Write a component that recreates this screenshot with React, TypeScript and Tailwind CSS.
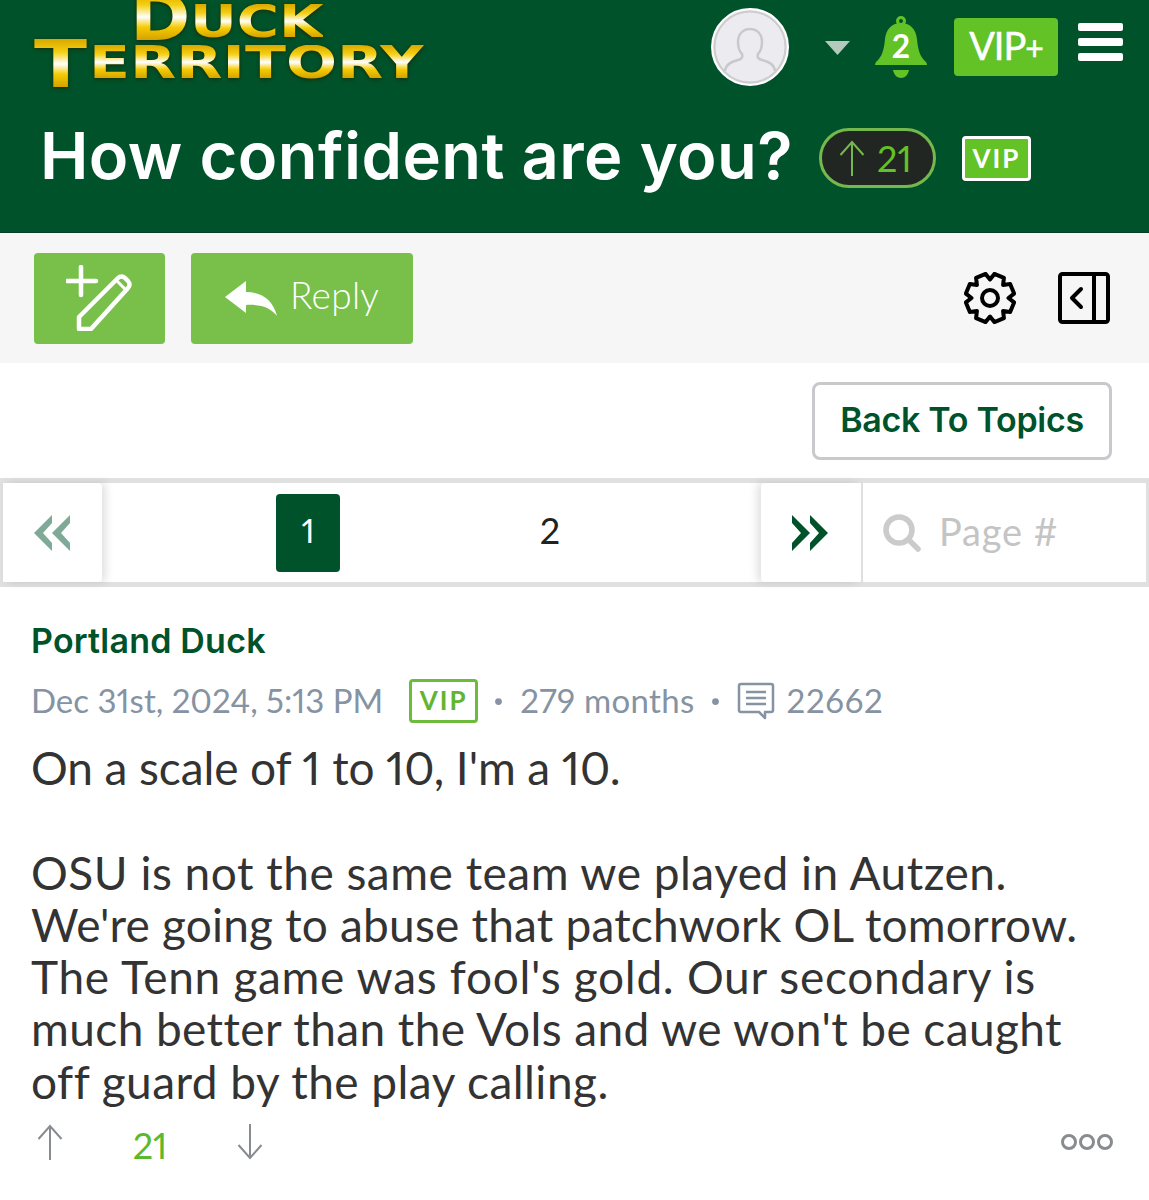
const gearPath = (() => {
  const cx = 26, cy = 26, ro = 24.5, ri = 18.5, n = 8;
  const pts: string[] = [];
  for (let i = 0; i < n; i++) {
    const a = (i * 2 * Math.PI) / n + Math.PI / 8;
    const step = (2 * Math.PI) / n;
    const offs: [number, number][] = [
      [-0.5, ri],
      [-0.27, ro],
      [0.27, ro],
      [0.5, ri],
    ];
    offs.forEach(([t, r]) => {
      const th = a + t * step;
      pts.push(`${(cx + r * Math.cos(th)).toFixed(2)},${(cy + r * Math.sin(th)).toFixed(2)}`);
    });
  }
  return pts.join(" ");
})();

function Logo() {
  const grad = "bg-[linear-gradient(180deg,#d9a800_0%,#f5cf10_25%,#ffffff_48%,#f5cb00_68%,#c99500_100%)] bg-clip-text text-transparent inline-block origin-left";
  return (
    <div className="w-[392px] h-[88px] flex flex-col shrink-0 font-['DejaVu_Sans',sans-serif] font-bold whitespace-nowrap [filter:drop-shadow(0_1px_2px_#1a2a00)]">
      <div className="pl-[96px] h-[39px] flex items-start">
        <span className={`${grad} text-[65px] leading-[52px] -mt-[8px] scale-x-[1.12]`}>D</span>
        <span className={`${grad} text-[45px] leading-[36px] mt-[4px] ml-[6px] scale-x-[1.28]`}>UCK</span>
      </div>
      <div className="h-[49px] flex items-start">
        <span className={`${grad} text-[65px] leading-[52px] scale-x-[1.2]`}>T</span>
        <span className={`${grad} text-[45px] leading-[36px] mt-[6px] ml-[11px] scale-x-[1.335]`}>ERRITORY</span>
      </div>
    </div>
  );
}

function Avatar() {
  return (
    <svg viewBox="0 0 78 78" className="w-[78px] h-[78px] shrink-0">
      <circle cx="39" cy="39" r="38" fill="#ececf0" stroke="#ffffff" strokeWidth="2" />
      <circle cx="39" cy="39" r="35.500" fill="none" stroke="#cccccf" strokeWidth="2" />
      <path d="M14 63c1-7 6-9 13-11 4-1 5-3 4-6-3-3-4-7-4-12 0-8 5-13 12-13s12 5 12 13c0 5-1 9-4 12-1 3 0 5 4 6 7 2 12 4 13 11" fill="none" stroke="#c9c9cd" strokeWidth="2.500" strokeLinejoin="round" />
    </svg>
  );
}

function Bell() {
  return (
    <div className="relative w-[52px] h-[62px] shrink-0">
      <svg viewBox="0 0 52 62" className="w-[52px] h-[62px]">
        <circle cx="26" cy="5" r="3.500" fill="none" stroke="#62c226" strokeWidth="3" />
        <path d="M26 7c10 0 15 7 16 16 1 11 3 18 9 23 1 2 1 3 1 3H0s0-1 1-3c6-5 8-12 9-23C11 14 16 7 26 7z" fill="#62c226" />
        <path d="M18 54h16c-1 5-4 8-8 8s-7-3-8-8z" fill="#62c226" />
      </svg>
      <span className="absolute left-0 right-0 top-[12px] text-center text-white text-[32px] leading-[36px] font-bold">2</span>
    </div>
  );
}

function Chevrons({ dir, color }: { dir: "left" | "right"; color: string }) {
  return (
    <svg viewBox="0 0 38 36" className="w-[38px] h-[36px]" fill={color}>
      {dir === "left" ? (
        <>
          <polygon points="18,0 18,8 9,18 18,28 18,36 0,18" />
          <polygon points="36,0 36,8 27,18 36,28 36,36 18,18" />
        </>
      ) : (
        <>
          <polygon points="0,0 18,18 0,36 0,28 9,18 0,8" />
          <polygon points="18,0 36,18 18,36 18,28 27,18 18,8" />
        </>
      )}
    </svg>
  );
}

function ThinArrow({ up, className, color }: { up: boolean; className: string; color: string }) {
  return (
    <svg viewBox="0 0 26 36" className={className} fill="none" stroke={color} strokeWidth="2">
      {up ? <path d="M13 36V2M1.500 15 13 2l11.500 13" /> : <path d="M13 0v34M1.500 21 13 34l11.500-13" />}
    </svg>
  );
}

export default function App() {
  return (
    <div className="w-[1149px] h-[1200px] overflow-hidden bg-white font-['Lato',sans-serif] proportional-nums">
      <header className="h-[233px] bg-[#00522a] border-b border-b-[#0b3d26] overflow-hidden">
        <div className="flex items-start pl-[34px] pr-[26px] h-[103px]">
          <Logo />
          <div className="ml-auto flex items-start">
            <div className="mt-[8px]"><Avatar /></div>
            <svg viewBox="0 0 25 14" className="w-[25px] h-[14px] mt-[41px] ml-[36px] shrink-0">
              <polygon points="0,0 25,0 12.500,14" fill="#b4cabd" />
            </svg>
            <div className="mt-[16px] ml-[25px]"><Bell /></div>
            <div className="mt-[18px] ml-[27px] w-[104px] h-[58px] rounded-[4px] bg-[#62c226] text-white text-[38px] leading-[54px] text-center font-normal tracking-[-1px] [-webkit-text-stroke:0.5px_white]">
              VIP<span className="text-[32px]">+</span>
            </div>
            <div className="mt-[23px] ml-[20px] w-[45px] flex flex-col gap-[7px]">
              <div className="h-[8px] rounded-[2px] bg-white" />
              <div className="h-[8px] rounded-[2px] bg-white" />
              <div className="h-[8px] rounded-[2px] bg-white" />
            </div>
          </div>
        </div>
        <div className="flex items-center pl-[40px] h-[100px]">
          <h1 className="text-[65px] leading-[100px] pt-[5px] font-['Inter',sans-serif] font-semibold text-white whitespace-nowrap tracking-[0.4px]">How confident are you?</h1>
          <div className="ml-[26px] w-[117px] h-[60px] rounded-full bg-[#222623] border-[3px] border-[#74b84e] flex items-center pl-[17px] gap-[12px] mt-[10px] shrink-0">
            <ThinArrow up className="w-[26px] h-[36px]" color="#74b84e" />
            <span className="text-[#62c226] text-[36px] leading-none">21</span>
          </div>
          <div className="ml-[26px] w-[69px] h-[45px] rounded-[4px] bg-[#62c226] border-[3px] border-white text-white text-[26px] leading-[39px] text-center font-bold tracking-[2px] mt-[10px] shrink-0">VIP</div>
        </div>
      </header>

      <div className="h-[130px] bg-[#f6f6f6] flex items-center pl-[34px] pr-[39px]">
        <button className="w-[131px] h-[91px] rounded-[4px] bg-[#78c04a] flex items-center justify-center">
          <svg viewBox="0 0 68 66" className="w-[68px] h-[66px]" fill="none" stroke="#fff" strokeWidth="4.500" strokeLinecap="round" strokeLinejoin="round">
            <path d="M15 2v28M1 16h29" />
            <path d="M13 64V52L52 13c2-2 5-2 7 0l3 3c2 2 2 5 0 7L25 64z" />
            <path d="M50 15l10 10" strokeWidth="3" />
          </svg>
        </button>
        <button className="ml-[26px] w-[222px] h-[91px] rounded-[4px] bg-[#78c04a] flex items-center pl-[34px] gap-[13px] text-white">
          <svg viewBox="0 0 52 35" className="w-[52px] h-[35px] shrink-0" fill="#fff">
            <path d="M0 16 21 0v11c16 0 27 8 31 24C46 27 36 23 21 24v8z" />
          </svg>
          <span className="text-[37px] leading-none font-light pb-[7px] tracking-[0.3px]">Reply</span>
        </button>
        <div className="ml-auto flex items-center gap-[42px]">
          <svg viewBox="0 0 52 52" className="w-[52px] h-[52px]" fill="none" stroke="#000" strokeWidth="4" strokeLinejoin="round">
            <polygon points={gearPath} />
            <circle cx="26" cy="26" r="8" />
          </svg>
          <svg viewBox="0 0 52 52" className="w-[52px] h-[52px]" fill="none" stroke="#000" strokeWidth="4" strokeLinejoin="round" strokeLinecap="round">
            <rect x="2" y="2" width="48" height="48" rx="2.500" />
            <path d="M36 2v48" />
            <path d="M23 17 14 26l9 9" />
          </svg>
        </div>
      </div>

      <div className="h-[115px] flex items-start justify-end pt-[19px] pr-[37px]">
        <button className="w-[300px] h-[78px] rounded-[8px] border-[3px] border-[#c8c8cd] text-[#00522a] text-[34px] font-['Inter',sans-serif] font-semibold tracking-[-0.3px] leading-none pb-[3px]">Back To Topics</button>
      </div>

      <nav className="h-[109px] border-y-[5px] border-y-[#e0e0e0] border-x-[3px] border-x-[#e0e0e0] flex items-stretch">
        <div className="w-[99px] rounded-[4px] bg-white shadow-[4px_0_8px_rgba(0,0,0,0.12)] flex items-center justify-center shrink-0">
          <Chevrons dir="left" color="#7faa97" />
        </div>
        <div className="flex-1 flex items-center">
          <div className="ml-[174px] w-[64px] h-[78px] rounded-[4px] bg-[#00522a] text-white text-[33px] font-normal flex items-center justify-center pb-[3px]">1</div>
          <div className="ml-[178px] w-[64px] text-center text-[#222] text-[36px] pb-[5px]">2</div>
        </div>
        <div className="w-[100px] rounded-[4px] bg-white shadow-[-4px_0_8px_rgba(0,0,0,0.12)] flex items-center justify-center shrink-0">
          <Chevrons dir="right" color="#00522a" />
        </div>
        <div className="w-[285px] border-l-[2px] border-l-[#e0e0e0] flex items-center pl-[20px] gap-[18px] shrink-0">
          <svg viewBox="0 0 38 38" className="w-[38px] h-[38px]" fill="none" stroke="#cbcbcb" strokeWidth="5.500" strokeLinecap="round">
            <circle cx="16" cy="16" r="13" />
            <path d="M26 26l9 9" />
          </svg>
          <span className="text-[#c4c4c4] text-[38px] leading-none font-normal tracking-[0.8px] pb-[3px]">Page #</span>
        </div>
      </nav>

      <article className="pl-[31px] pr-[36px] pt-[34px]">
        <div className="text-[#00522a] text-[34px] leading-[40px] font-['Inter',sans-serif] font-semibold tracking-[0.2px]">Portland Duck</div>
        <div className="mt-[18px] h-[44px] flex items-center text-[#8593a3] text-[33px] whitespace-nowrap">
          <span>Dec 31st, 2024, 5:13 PM</span>
          <span className="ml-[26px] w-[69px] h-[44px] rounded-[4px] border-[3px] border-[#6cbb3c] text-[#62b52f] text-[26px] leading-[37px] text-center font-bold tracking-[2px]">VIP</span>
          <span className="ml-[16px] w-[9px] h-[9px] rounded-full bg-[#8593a3] scale-75" />
          <span className="ml-[17px] tracking-[0.3px]">279 months</span>
          <span className="ml-[17px] w-[9px] h-[9px] rounded-full bg-[#8593a3] scale-75" />
          <svg viewBox="0 0 38 38" className="ml-[17px] w-[38px] h-[38px] shrink-0" fill="none" stroke="#8593a3" strokeWidth="2.500" strokeLinejoin="round">
            <path d="M4 2h30a2 2 0 0 1 2 2v24a2 2 0 0 1-2 2h-6v6l-6-6H4a2 2 0 0 1-2-2V4a2 2 0 0 1 2-2z" />
            <path d="M9 10h20M9 16h20M9 22h20" />
          </svg>
          <span className="ml-[11px] tracking-[0.7px]">22662</span>
        </div>
        <div className="mt-[19px] text-[#333333] text-[46px] leading-[52.300px] whitespace-nowrap">
          <p className="tracking-[-0.1px]">On a scale of 1 to 10, I'm a 10.</p>
          <p>&nbsp;</p>
          <p className="tracking-[0.5px]">OSU is not the same team we played in Autzen.</p>
          <p className="tracking-[0.2px]">We're going to abuse that patchwork OL tomorrow.</p>
          <p className="tracking-[0.7px]">The Tenn game was fool's gold. Our secondary is</p>
          <p className="tracking-[0.4px]">much better than the Vols and we won't be caught</p>
          <p className="tracking-[0.47px]">off guard by the play calling.</p>
        </div>
        <div className="mt-[13px] flex items-center">
          <ThinArrow up className="ml-[6px] w-[26px] h-[36px]" color="#888b90" />
          <span className="ml-[57px] w-[60px] text-center text-[#5cb82c] text-[36px] leading-none mt-[6px]">21</span>
          <ThinArrow up={false} className="ml-[57px] w-[26px] h-[36px]" color="#888b90" />
          <div className="ml-auto flex gap-[2px]">
            <span className="w-[16px] h-[16px] rounded-full border-[3px] border-[#888b90]" />
            <span className="w-[16px] h-[16px] rounded-full border-[3px] border-[#888b90]" />
            <span className="w-[16px] h-[16px] rounded-full border-[3px] border-[#888b90]" />
          </div>
        </div>
      </article>
    </div>
  );
}
